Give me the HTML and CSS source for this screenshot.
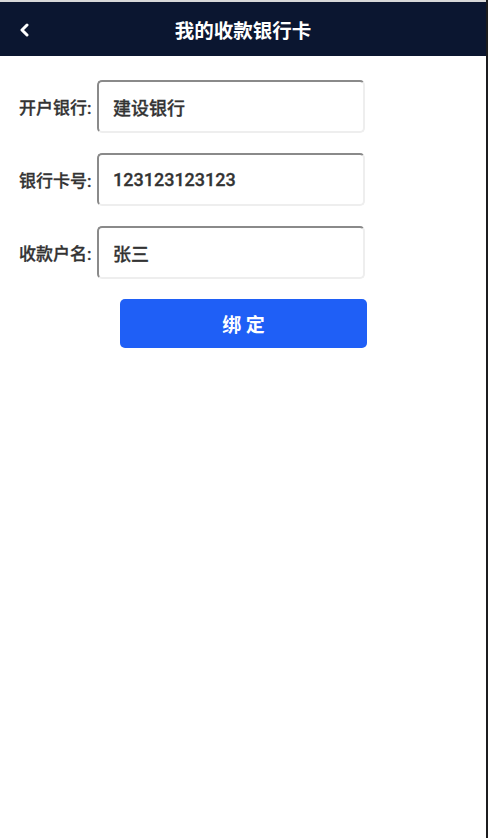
FILE: index.html
```html
<html lang="zh-CN">
<head>
  <meta charset="UTF-8">
  <meta name="viewport" content="width=device-width, initial-scale=1.0">
  <title>我的收款银行卡</title>
  <link rel="stylesheet" href="styles.css">
</head>
<body>
  <div class="page">
    <div class="header">
      <span class="back">
        <svg width="12" height="14" viewBox="0 0 12 14">
          <path d="M9 2 L4 7 L9 12" fill="none" stroke="#fff" stroke-width="3" stroke-linecap="round" stroke-linejoin="round"/>
        </svg>
      </span>
      <h1>我的收款银行卡</h1>
    </div>

    <form class="card-form">
      <div class="row">
        <label for="bank">开户银行:</label>
        <input id="bank" type="text" value="建设银行">
      </div>
      <div class="row">
        <label for="cardNo">银行卡号:</label>
        <input id="cardNo" type="text" value="123123123123">
      </div>
      <div class="row">
        <label for="holder">收款户名:</label>
        <input id="holder" type="text" value="张三">
      </div>
      <button type="button">绑 定</button>
    </form>
  </div>
</body>
</html>
```

FILE: styles.css
```css
html {
  background: #1c1c1e;
}

body {
  margin: 0;
  padding: 0;
  font-family: Roboto, "Noto Sans CJK SC", sans-serif;
  color: #333;
}

.page {
  width: 486px;
  height: 836px;
  background: #fff;
  border-top: 2px solid #d8d8d8;
}

.header {
  position: relative;
  height: 54px;
  background: #0b1630;
  display: flex;
  align-items: center;
  justify-content: center;
}

.back {
  position: absolute;
  left: 18px;
  top: 21px;
}

.header h1 {
  margin: 0;
  font-size: 19.5px;
  font-weight: bold;
  color: #fff;
}

.card-form {
  padding: 24px 0 0 19px;
}

.row {
  display: flex;
  align-items: center;
  margin-bottom: 20px;
}

label {
  width: 78px;
  font-size: 17px;
  font-weight: 500;
  color: #333;
  -webkit-text-stroke: 0.3px #333;
}

input {
  box-sizing: border-box;
  width: 268px;
  height: 53px;
  padding: 0 14px;
  border: 2px solid #eee;
  border-top-color: #8a8a8a;
  border-left-color: #8a8a8a;
  border-radius: 5px;
  font-family: inherit;
  font-size: 18px;
  font-weight: 500;
  color: #333;
  -webkit-text-stroke: 0.3px #333;
  outline: none;
}

button {
  display: block;
  width: 247px;
  height: 49px;
  margin: 0 0 0 101px;
  background-color: #1f5ff6;
  color: #fff;
  border: none;
  border-radius: 5px;
  font-family: inherit;
  font-size: 19px;
  font-weight: bold;
  cursor: pointer;
}
```
